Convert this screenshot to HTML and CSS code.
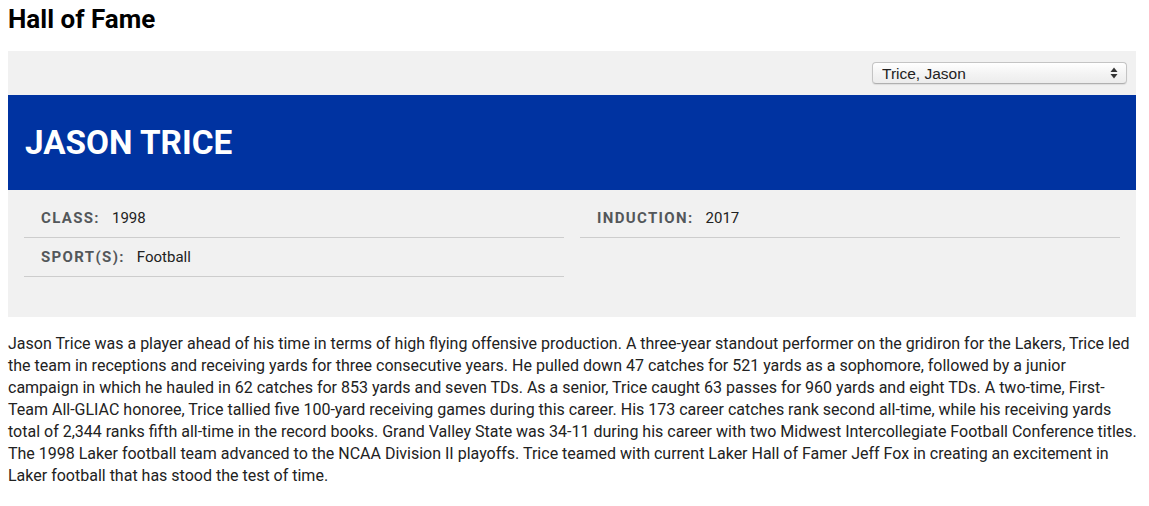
FILE: index.html
```html
<!DOCTYPE html>
<html lang="en">
<head>
<meta charset="utf-8">
<title>Hall of Fame</title>
<link rel="stylesheet" href="styles.css">
</head>
<body>
<h1 class="page-title">Hall of Fame</h1>
<section class="hof-card">
  <div class="hof-toolbar">
    <div class="select-wrap">
      <select class="hof-select">
        <option>Trice, Jason</option>
      </select>
      <svg class="select-arrows" width="8" height="12" viewBox="0 0 8 12" aria-hidden="true">
        <path d="M4 0.5 L7.5 5 L0.5 5 Z" fill="#333"/>
        <path d="M4 11.5 L7.5 7 L0.5 7 Z" fill="#333"/>
      </svg>
    </div>
  </div>
  <div class="hof-banner">
    <h2 class="hof-name">JASON TRICE</h2>
  </div>
  <div class="hof-info">
    <div class="info-col">
      <div class="info-row"><span class="info-label">Class:</span><span class="info-value">1998</span></div>
      <div class="info-row"><span class="info-label">Sport(s):</span><span class="info-value">Football</span></div>
    </div>
    <div class="info-col">
      <div class="info-row"><span class="info-label">Induction:</span><span class="info-value">2017</span></div>
    </div>
  </div>
</section>
<p class="hof-bio">Jason Trice was a player ahead of his time in terms of high flying offensive production. A three-year standout performer on the gridiron for the Lakers, Trice led the team in receptions and receiving yards for three consecutive years. He pulled down 47 catches for 521 yards as a sophomore, followed by a junior campaign in which he hauled in 62 catches for 853 yards and seven TDs. As a senior, Trice caught 63 passes for 960 yards and eight TDs. A two-time, First-Team All-GLIAC honoree, Trice tallied five 100-yard receiving games during this career. His 173 career catches rank second all-time, while his receiving yards total of 2,344 ranks fifth all-time in the record books. Grand Valley State was 34-11 during his career with two Midwest Intercollegiate Football Conference titles. The 1998 Laker football team advanced to the NCAA Division II playoffs. Trice teamed with current Laker Hall of Famer Jeff Fox in creating an excitement in Laker football that has stood the test of time.</p>
</body>
</html>
```

FILE: styles.css
```css
html, body {
  margin: 0;
  padding: 0;
  background: #fff;
}

body {
  padding: 0 8px;
  font-family: Roboto, "Liberation Sans", Arial, sans-serif;
  color: #222;
}

.page-title {
  margin: 0;
  padding-top: 4px;
  font-size: 26px;
  line-height: 30px;
  font-weight: 700;
  color: #000;
}

.hof-card {
  width: 1128px;
  margin-top: 17px;
  background: #f1f1f1;
}

.hof-toolbar {
  display: flex;
  justify-content: flex-end;
  padding: 11px 9px 11px 0;
}

.select-wrap {
  position: relative;
  width: 255px;
  height: 22px;
}

.hof-select {
  -webkit-appearance: none;
  appearance: none;
  width: 100%;
  height: 22px;
  margin: 0;
  padding: 0 20px 0 9px;
  box-sizing: border-box;
  border: 1px solid #c4c4c4;
  border-bottom-color: #b0b0b0;
  border-radius: 4px;
  background: linear-gradient(#ffffff, #f4f4f4 50%, #ececec);
  box-shadow: 0 1px 1px rgba(0, 0, 0, 0.08);
  font-family: "Liberation Sans", Arial, sans-serif;
  font-size: 15.5px;
  color: #222;
}

.select-arrows {
  position: absolute;
  right: 9px;
  top: 5px;
  pointer-events: none;
}

.hof-banner {
  background: #0033a1;
  height: 95px;
  display: flex;
  align-items: center;
  padding: 0 17px;
}

.hof-name {
  margin: 0;
  font-size: 33.3px;
  font-weight: 700;
  color: #fff;
  line-height: 1;
  padding-top: 0;
}

.hof-info {
  display: grid;
  grid-template-columns: 1fr 1fr;
  column-gap: 16px;
  padding: 9px 16px 40px;
}

.info-row {
  display: flex;
  align-items: center;
  gap: 12px;
  height: 38px;
  padding: 0 17px;
  border-bottom: 1px solid #cdcdcd;
  font-size: 15px;
}

.info-label {
  font-size: 15px;
  font-weight: 700;
  text-transform: uppercase;
  letter-spacing: 1.35px;
  color: #53575a;
}

.info-value {
  color: #222;
}

.hof-bio {
  width: 1130px;
  margin: 16px 0 0;
  font-size: 16px;
  line-height: 22px;
  color: #222;
}
```
